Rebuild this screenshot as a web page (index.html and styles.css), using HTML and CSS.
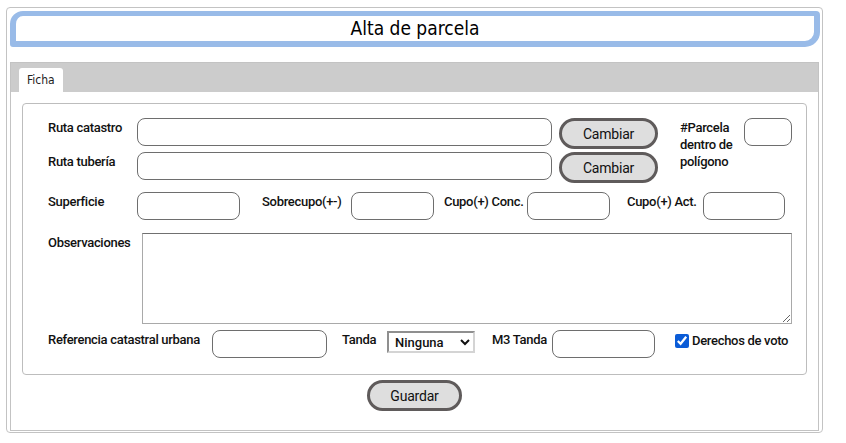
FILE: index.html
```html
<!DOCTYPE html>
<html lang="es">
<head>
<meta charset="utf-8">
<title>Alta de parcela</title>
<link rel="stylesheet" href="styles.css">
</head>
<body>
<div class="page">
  <div class="title-box">Alta de parcela</div>
  <div class="tabs">
    <div class="tabs-nav">
      <div class="tab">Ficha</div>
    </div>
    <div class="tab-panel">
      <div class="fieldset">
        <div class="top-grid">
          <label class="lbl lbl-r1">Ruta catastro</label>
          <input class="inp inp-ruta" type="text">
          <button class="btn btn-cambiar" type="button">Cambiar</button>
          <label class="lbl lbl-parcela">#Parcela dentro de polígono</label>
          <input class="inp inp-parcela" type="text">
          <label class="lbl lbl-r2">Ruta tubería</label>
          <input class="inp inp-ruta inp-r2" type="text">
          <button class="btn btn-cambiar btn-r2" type="button">Cambiar</button>
        </div>
        <div class="row row-cupos">
          <label class="lbl w-sup">Superficie</label>
          <div class="cell w-sup-i"><input class="inp inp-sup" type="text"></div>
          <label class="lbl w-sob">Sobrecupo(+-)</label>
          <div class="cell w-sob-i"><input class="inp inp-small" type="text"></div>
          <label class="lbl w-conc">Cupo(+) Conc.</label>
          <div class="cell w-conc-i"><input class="inp inp-small" type="text"></div>
          <label class="lbl w-act">Cupo(+) Act.</label>
          <div class="cell"><input class="inp inp-act" type="text"></div>
        </div>
        <div class="row row-obs">
          <label class="lbl w-obs">Observaciones</label>
          <textarea class="obs"></textarea>
        </div>
        <div class="row row-ref">
          <label class="lbl w-ref">Referencia catastral urbana</label>
          <div class="cell w-ref-i"><input class="inp inp-ref" type="text"></div>
          <label class="lbl w-tanda">Tanda</label>
          <div class="cell w-tanda-i">
            <select class="sel"><option>Ninguna</option></select>
          </div>
          <label class="lbl w-m3">M3 Tanda</label>
          <div class="cell w-m3-i"><input class="inp inp-m3" type="text"></div>
          <label class="chk-lbl"><input class="chk" type="checkbox" checked><span>Derechos de voto</span></label>
        </div>
      </div>
      <div class="actions">
        <button class="btn btn-guardar" type="button">Guardar</button>
      </div>
    </div>
  </div>
</div>
</body>
</html>
```
FILE: styles.css
```css
* { box-sizing: border-box; }
html, body { margin: 0; padding: 0; background: #fff; }
body { font-family: Roboto, "Liberation Sans", sans-serif; color: #111; }

.page {
  margin: 7px 0 0 6px;
  width: 817px;
  border: 1px solid #c3c3c3;
  border-radius: 4px;
  padding: 3px 3px 1px 3px;
}

.title-box {
  height: 36px;
  margin-right: -1px;
  border: 6px solid #99bbe8;
  border-top-width: 5px;
  border-radius: 13px 4px 15px 3px;
  font-family: "DejaVu Sans Condensed", "DejaVu Sans", sans-serif;
  font-stretch: condensed;
  font-size: 19px;
  line-height: 25px;
  text-align: center;
  color: #000;
}

.tabs {
  margin-top: 15px;
  border: 1px solid #c3c3c3;
}
.tabs-nav {
  background: #cccccc;
  height: 29px;
  padding: 5px 0 0 8px;
  display: flex;
}
.tab {
  background: #fff;
  height: 24px;
  width: 44px;
  border-radius: 3px 3px 0 0;
  font-family: "DejaVu Sans Condensed", "DejaVu Sans", sans-serif;
  font-stretch: condensed;
  font-size: 12px;
  line-height: 24px;
  padding-left: 8px;
  color: #222;
}

.tab-panel {
  padding: 11px 11px 19px 11px;
}
.fieldset {
  border: 1px solid #bdbdbd;
  border-radius: 4px;
  height: 272px;
  padding: 14px 11px 0 25px;
}

.lbl {
  font-family: Roboto, "Liberation Sans", sans-serif;
  font-weight: 500;
  font-size: 13px;
  line-height: 16px;
  letter-spacing: -0.3px;
  color: #111;
  padding-top: 2px;
  white-space: nowrap;
}

.inp {
  height: 28px;
  border: 1px solid #6e6e6e;
  border-radius: 8px;
  background: #fff;
  padding: 0 6px;
  font: 13px Roboto, sans-serif;
}

.top-grid {
  display: grid;
  grid-template-columns: 89px 422px 121px 64px 48px;
  grid-template-rows: 31px 31px;
  row-gap: 3px;
}
.lbl-r1 { grid-column: 1; grid-row: 1; }
.lbl-r2 { grid-column: 1; grid-row: 2; }
.inp-ruta { grid-column: 2; grid-row: 1; width: 415px; }
.inp-r2 { grid-row: 2; }
.btn-cambiar { grid-column: 3; grid-row: 1; width: 99px; }
.btn-r2 { grid-row: 2; }
.lbl-parcela {
  grid-column: 4; grid-row: 1 / span 2;
  white-space: normal;
  line-height: 17px;
  padding-top: 1px;
  padding-right: 6px;
}
.inp-parcela { grid-column: 5; grid-row: 1; width: 48px; }

.btn {
  height: 31px;
  border: 3px solid #5f5b5b;
  border-radius: 16px;
  background: #dedede;
  font-family: Roboto, "Liberation Sans", sans-serif;
  font-size: 14px;
  letter-spacing: -0.2px;
  color: #111;
  padding: 0;
}

.row { display: flex; align-items: flex-start; }
.row-cupos { margin-top: 9px; }
.w-sup { width: 89px; }
.w-sup-i { width: 125px; }
.inp-sup { width: 103px; }
.w-sob { width: 89px; }
.w-sob-i { width: 93px; }
.inp-small { width: 83px; }
.w-conc { width: 83px; }
.w-conc-i { width: 100px; }
.w-act { width: 76px; }
.inp-act { width: 82px; }

.row-obs { margin-top: 13px; }
.w-obs { width: 94px; }
.obs {
  width: 650px;
  height: 91px;
  border: 1px solid #a9a9a9;
  border-top-color: #707070;
  resize: both;
  margin: 0;
}

.row-ref { margin-top: 6px; }
.w-ref { width: 164px; }
.w-ref-i { width: 130px; }
.inp-ref { width: 115px; }
.w-tanda { width: 45px; }
.w-tanda-i { width: 105px; padding-top: 1px; }
.sel {
  width: 88px;
  height: 22px;
  border-style: solid;
  border-width: 2px;
  border-color: #8f8f8f #d4d4d4 #d4d4d4 #8f8f8f;
  border-radius: 0;
  background: #fff;
  font-family: Roboto, "Liberation Sans", sans-serif;
  font-weight: 500;
  font-size: 13px;
  color: #111;
  padding: 0 2px;
}
.w-m3 { width: 60px; }
.w-m3-i { width: 123px; }
.inp-m3 { width: 103px; }

.chk-lbl {
  display: flex;
  align-items: center;
  gap: 3px;
  padding-top: 3px;
  font-weight: 500;
  font-size: 13px;
  letter-spacing: -0.3px;
  white-space: nowrap;
}
.chk {
  width: 14px;
  height: 14px;
  margin: 0;
  accent-color: #0b5cd7;
}

.actions {
  display: flex;
  justify-content: center;
  margin-top: 5px;
}
.btn-guardar { width: 95px; }
```
